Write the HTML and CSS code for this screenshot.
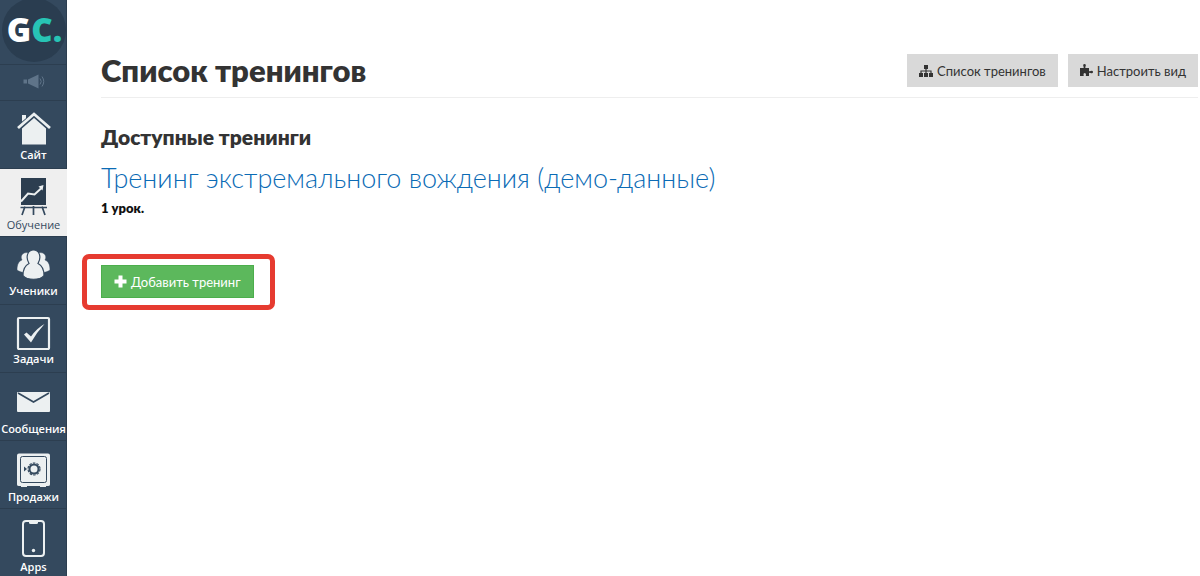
FILE: index.html
```html
<!DOCTYPE html>
<html lang="ru">
<head>
<meta charset="utf-8">
<meta name="viewport" content="width=device-width, initial-scale=1">
<title>Список тренингов</title>
<link rel="stylesheet" href="styles.css">
</head>
<body>
<div class="app">
  <nav class="sidebar" aria-label="Главное меню">
    <a class="brand" href="#"><span class="brand-circle">G<span class="brand-accent">C.</span></span></a>
    <button class="notice" type="button" aria-label="Уведомления">
      <svg width="22" height="16" viewBox="22 74 22 16"><path d="M22.500 79.500h3.500v4h-3.500z" fill="#5f7489"/><path d="M27 79.500 37.500 74.500v14L27 83.500z" fill="#5f7489"/><path d="M39 78.500q2.500 3 0 6M41 76.500q3.500 5 0 10" fill="none" stroke="#5f7489" stroke-width="1"/></svg>
    </button>
    <a class="item" href="#">
      <svg class="icon" viewBox="0 110 67 36"><path d="M22 115h4v4l-4 4z" fill="#ecf0f1"/><path d="M34 116.500 46 127.500V144.500H22V127.500z" fill="#ecf0f1"/><path d="M18 128.500 34 114.500 50 128.500" fill="none" stroke="#34495e" stroke-width="5"/><path d="M18 128 34 114 50 128" fill="none" stroke="#ecf0f1" stroke-width="2.800"/></svg>
      <span>Сайт</span>
    </a>
    <a class="item item-mid item-active" href="#" aria-current="page">
      <svg class="icon" viewBox="0 178 67 38"><path d="M21 178h25v27H21z" fill="#2c3e50"/><path d="M20.500 207.500h26.500M25 206.500l-3 8.500M33.500 206v9M42 206.500l3 8.500" stroke="#34495e" stroke-width="1.700" fill="none"/><path d="M21 201.500 28 193.500 34.500 194.500 41 188.500" stroke="#ecf0f1" stroke-width="2" fill="none"/><path d="M38.500 186.500 43.500 185 42.500 190.500z" fill="#ecf0f1"/></svg>
      <span>Обучение</span>
    </a>
    <a class="item" href="#">
      <svg class="icon" viewBox="0 246 67 36"><g fill="#ecf0f1" stroke="#34495e"><path d="M17 270c0-6 2-9 5-10-4-7 8-11 9-3v14c-5 2-10 2-14-1zM50 270c0-6-2-9-5-10 4-7-8-11-9-3v14c5 2 10 2 14-1z" stroke-width=".5"/><path d="M23 275.500c0-7 2-10 6-12-4-7-1-13.500 4.500-13.500S42 256.500 38 263.500c4 2 6 5 6 12-4 5-17 5-21 0z" stroke-width="1.200"/></g></svg>
      <span>Ученики</span>
    </a>
    <a class="item" href="#">
      <svg class="icon" viewBox="0 314 67 36"><rect x="18" y="318" width="31" height="31" rx="1" fill="none" stroke="#ecf0f1" stroke-width="2.200"/><path d="M24 334.500 26.500 332.500 31 336.500Q37 328 44.500 324 37 332 31 342.500z" fill="#ecf0f1"/></svg>
      <span>Задачи</span>
    </a>
    <a class="item item-mid" href="#">
      <svg class="icon" viewBox="0 382 67 38"><rect x="17" y="392" width="33" height="20" rx="1" fill="#ecf0f1"/><path d="M18 393 33.500 402 49 393" fill="none" stroke="#34495e" stroke-width="1.700"/></svg>
      <span>Сообщения</span>
    </a>
    <a class="item item-mid" href="#">
      <svg class="icon" viewBox="0 450 67 38"><path d="M19 453.500h29q2 0 2 2v29q0 1.500-2 1.500h-2v1h-6v-1H27v1h-6v-1h-2q-2 0-2-1.500v-29q0-2 2-2z" fill="#ecf0f1"/><rect x="20.500" y="456.500" width="26" height="26" rx="2" fill="none" stroke="#34495e"/><path d="M24 466.500 27 469 24 471.500z" fill="#34495e"/><circle cx="34" cy="469" r="4.500" fill="none" stroke="#34495e" stroke-width="2"/><circle cx="34" cy="469" r="6" fill="none" stroke="#34495e" stroke-width="1.200" stroke-dasharray="2.500 1.270"/></svg>
      <span>Продажи</span>
    </a>
    <a class="item item-tall" href="#">
      <svg class="icon" viewBox="0 518 67 40"><rect x="23" y="521" width="21" height="35" rx="3" fill="none" stroke="#ecf0f1" stroke-width="2"/><path d="M29 521h9v1.500q0 1.500-1.500 1.500h-6q-1.500 0-1.500-1.500z" fill="#ecf0f1"/><circle cx="33.500" cy="550.500" r="1.700" fill="#ecf0f1"/></svg>
      <span>Apps</span>
    </a>
  </nav>
  <main class="content">
    <header class="page-header">
      <h1 class="page-title">Список тренингов</h1>
      <div class="actions">
        <button class="btn" type="button"><svg width="14" height="12" viewBox="0 0 14 12"><path d="M5 0h4v4H5zM0 8h4v4H0zM5 8h4v4H5zM10 8h4v4h-4z" fill="#333"/><path d="M7 3v6M2 9V6h10v3" fill="none" stroke="#333" stroke-width="1.200"/></svg>Список тренингов</button>
        <button class="btn" type="button"><svg width="13" height="13" viewBox="0 0 13 13"><path d="M0 4h3.500Q4 3.500 3.500 2.500 2.500 0 4.500 0T5.500 2.500Q5 3.500 5.500 4H9v3q.5.700 1.500 0 2.500-.800 2.500 1T10.500 9Q9.500 8.500 9 9v3H6Q5.500 11.500 6 10.500 6 9 4.700 9T3.500 10.500Q4 11.500 3.500 12H0z" fill="#333"/></svg>Настроить вид</button>
      </div>
    </header>
    <section>
      <h2 class="section-title">Доступные тренинги</h2>
      <a class="training-link" href="#">Тренинг экстремального вождения (демо-данные)</a>
      <p class="lessons">1 урок.</p>
    </section>
    <div class="highlight">
      <button class="btn btn-add" type="button"><svg width="13" height="13" viewBox="0 0 13 13"><path d="M4.500 .5h4v4h4v4h-4v4h-4v-4h-4v-4h4z" fill="#fff"/></svg>Добавить тренинг</button>
    </div>
  </main>
</div>
</body>
</html>
```
FILE: styles.css
```css
* {
  box-sizing: border-box;
}

body {
  margin: 0;
  background: #fff;
  color: #333;
  font-family: Lato, "Noto Sans", sans-serif;
}

.app {
  display: flex;
  height: 100vh;
  overflow: hidden;
}

.sidebar {
  flex: 0 0 67px;
  display: flex;
  flex-direction: column;
  background: #34495e;
  box-shadow: inset -1px 0 #2c3e50;
  overflow: hidden;
  font-family: "Open Sans", sans-serif;
}

.brand {
  flex: none;
  display: flex;
  justify-content: center;
  align-items: flex-end;
  height: 65px;
  padding-bottom: 2px;
  border-bottom: 1px solid #2c3e50;
  text-decoration: none;
}

.brand-circle {
  flex: none;
  width: 64px;
  height: 64px;
  padding-left: 2px;
  border-radius: 50%;
  background: #2a3d50;
  color: #fff;
  font-size: 33px;
  font-weight: 800;
  line-height: 64px;
  text-align: center;
}

.brand-accent {
  color: #27c4b5;
}

.notice {
  flex: none;
  display: flex;
  align-items: center;
  justify-content: center;
  height: 36px;
  padding: 0 0 2px;
  border: 0;
  border-bottom: 1px solid #2c3e50;
  background: none;
}

.item {
  flex: none;
  display: flex;
  flex-direction: column;
  align-items: center;
  height: 68px;
  padding-top: 9px;
  border-bottom: 1px solid #2c3e50;
  color: #fff;
  font-size: 11px;
  font-weight: 600;
  line-height: 17px;
  text-decoration: none;
  white-space: nowrap;
}

.item-active {
  background: #efefef;
  color: #34495e;
  font-weight: 500;
}

.icon {
  flex: none;
  width: 67px;
  height: 36px;
}

.item-mid .icon {
  height: 38px;
}

.item-tall .icon {
  height: 40px;
}

.content {
  flex: 1;
  min-width: 0;
  padding: 54px 2px 0 34px;
}

.page-header {
  display: flex;
  justify-content: space-between;
  align-items: flex-start;
  padding-bottom: 10px;
  border-bottom: 1px solid #eee;
}

.page-title {
  margin: 0;
  font-size: 31px;
  font-weight: 800;
  line-height: 32px;
}

.actions {
  display: flex;
  gap: 10px;
}

.btn {
  display: flex;
  align-items: center;
  gap: 4px;
  height: 33px;
  padding: 0 12px;
  border: 0;
  background: #d9d9d9;
  color: #333;
  font: 400 13px/20px Lato, "Noto Sans", sans-serif;
  white-space: nowrap;
}

.section-title {
  margin: 26px 0 12px;
  font-size: 21px;
  font-weight: 800;
  line-height: 26px;
}

.training-link {
  display: block;
  color: #0b6bb5;
  font-size: 27px;
  font-weight: 300;
  line-height: 32px;
  text-decoration: none;
}

.lessons {
  margin: 4px 0 0;
  color: #111;
  font-size: 13px;
  font-weight: 800;
  line-height: 20px;
}

.highlight {
  width: fit-content;
  margin: 36px 0 0 -19px;
  padding: 6px 16px 7px 14px;
  border: 5px solid #e63b30;
  border-radius: 7px;
}

.btn-add {
  border: 1px solid #4cae4c;
  background: #5cb85c;
  color: #fff;
}
```
